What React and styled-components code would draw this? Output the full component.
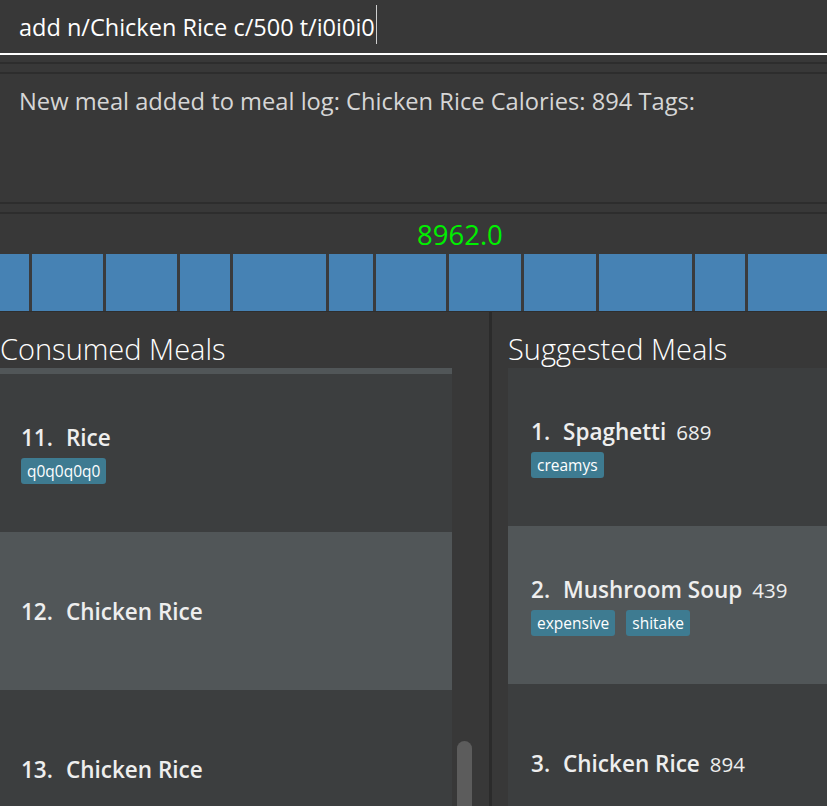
import React from 'react';
import styled, { createGlobalStyle } from 'styled-components';

const GlobalStyle = createGlobalStyle`
  *, *::before, *::after { box-sizing: border-box; }
  html, body { margin: 0; padding: 0; background: #383838; }
  body { font-family: "Open Sans", "Noto Sans", sans-serif; }
`;

const Window = styled.div`
  width: 827px;
  height: 806px;
  overflow: hidden;
  display: flex;
  flex-direction: column;
  background: #383838;
`;

const CommandBox = styled.div`
  flex: none;
  height: 55px;
  display: flex;
  align-items: center;
  padding: 0 0 0 19px;
  border-bottom: 2px solid #ffffff;
  color: #ffffff;
  font-size: 23.5px;
  line-height: 32px;
  white-space: pre;
`;

const Caret = styled.span`
  display: inline-block;
  width: 1px;
  height: 39px;
  margin: -4px 0 0 1px;
  background: #cfcfcf;
`;

const Separator = styled.div`
  flex: none;
  height: ${(p) => p.$h}px;
  border-bottom: 2px solid #2d2d2d;
`;

const ResultDisplay = styled.div`
  flex: none;
  height: 130px;
  padding: 12px 0 0 19px;
  border-bottom: 2px solid #2d2d2d;
  color: #d6d6d6;
  font-size: 23.7px;
  line-height: 31px;
  white-space: nowrap;
`;

const Status = styled.div`
  flex: none;
  height: 40px;
  padding: 2px 0 0 417px;
  color: #00f000;
  font-size: 27.5px;
  line-height: 37px;
`;

const Bar = styled.div`
  flex: none;
  height: 58px;
  display: flex;
  gap: 3px;
  background: #3a3b3d;
  border-bottom: 1px solid #2e2e2e;
`;

const Segment = styled.div`
  flex: ${(p) => (p.$grow ? '1 1 auto' : 'none')};
  background: #4682b4;
`;

const Lists = styled.div`
  flex: 1;
  display: flex;
  min-height: 0;
`;

const LeftPanel = styled.div`
  flex: none;
  width: 489px;
  display: flex;
  flex-direction: column;
`;

const Divider = styled.div`
  flex: none;
  width: 3px;
  background: #2b2b2b;
`;

const RightPanel = styled.div`
  flex: 1;
  display: flex;
  flex-direction: column;
  padding-left: 16px;
  min-width: 0;
`;

const PanelTitle = styled.div`
  flex: none;
  height: 56px;
  padding-top: 17px;
  color: #ffffff;
  font-size: 29px;
  font-weight: 300;
  line-height: 40px;
  white-space: nowrap;
`;

const ListRow = styled.div`
  flex: 1;
  display: flex;
  min-height: 0;
`;

const List = styled.div`
  flex: ${(p) => (p.$width ? 'none' : '1')};
  width: ${(p) => (p.$width ? `${p.$width}px` : 'auto')};
  display: flex;
  flex-direction: column;
`;

const Cell = styled.div`
  flex: none;
  height: ${(p) => p.$h || 158}px;
  background: ${(p) => (p.$light ? '#515658' : '#3c3e3f')};
  display: flex;
  flex-direction: column;
  justify-content: center;
  padding-left: ${(p) => p.$pad || 21}px;
`;

const NameRow = styled.div`
  display: flex;
  align-items: baseline;
  color: #eeeeee;
  line-height: 30px;
  white-space: nowrap;
  margin-top: 1px;
`;

const IdLabel = styled.span`
  font-size: 22.5px;
  font-weight: 600;
  margin-right: 13px;
`;

const NameLabel = styled.span`
  font-size: 22.5px;
  font-weight: 600;
`;

const Calories = styled.span`
  font-size: 20.5px;
  font-weight: 400;
  margin-left: 10px;
`;

const Tags = styled.div`
  display: flex;
  gap: 11px;
  margin-top: 5px;
`;

const Tag = styled.span`
  height: 26px;
  padding: 0 6px;
  border-radius: 3px;
  background: #3e7b91;
  color: #ffffff;
  font-size: 15.5px;
  font-weight: 500;
  line-height: 26px;
`;

const Track = styled.div`
  flex: none;
  width: 37px;
  padding: 373px 0 0 5px;
`;

const Thumb = styled.div`
  width: 15px;
  height: 90px;
  border-radius: 8px;
  background: #5c5c5c;
`;

const segments = [29, 71, 71, 50, 93, 44, 70, 72, 72, 93, 50, 0];

const consumed = [
  { id: 11, name: 'Rice', tags: ['q0q0q0q0'], light: false },
  { id: 12, name: 'Chicken Rice', tags: [], light: true },
  { id: 13, name: 'Chicken Rice', tags: [], light: false },
];

const suggested = [
  { id: 1, name: 'Spaghetti', cal: 689, tags: ['creamys'], light: false },
  { id: 2, name: 'Mushroom Soup', cal: 439, tags: ['expensive', 'shitake'], light: true },
  { id: 3, name: 'Chicken Rice', cal: 894, tags: [], light: false },
];

function MealCell({ meal, pad }) {
  return (
    <Cell $light={meal.light} $pad={pad}>
      <NameRow>
        <IdLabel>{meal.id}.</IdLabel>
        <NameLabel>{meal.name}</NameLabel>
        {meal.cal !== undefined && <Calories>{meal.cal}</Calories>}
      </NameRow>
      {meal.tags.length > 0 && (
        <Tags>
          {meal.tags.map((t) => (
            <Tag key={t}>{t}</Tag>
          ))}
        </Tags>
      )}
    </Cell>
  );
}

export default function App() {
  return (
    <Window>
      <GlobalStyle />
      <CommandBox>
        add n/Chicken Rice c/500 t/i0i0i0
        <Caret />
      </CommandBox>
      <Separator $h={9} />
      <Separator $h={10} />
      <ResultDisplay>New meal added to meal log: Chicken Rice Calories: 894 Tags:</ResultDisplay>
      <Separator $h={10} />
      <Status>8962.0</Status>
      <Bar>
        {segments.map((w, i) => (
          <Segment key={i} $grow={w === 0} style={w ? { width: w } : undefined} />
        ))}
      </Bar>
      <Lists>
        <LeftPanel>
          <PanelTitle>Consumed Meals</PanelTitle>
          <ListRow>
            <List $width={452}>
              <Cell $h={6} $light />
              {consumed.map((m) => (
                <MealCell key={m.id} meal={m} pad={21} />
              ))}
            </List>
            <Track>
              <Thumb />
            </Track>
          </ListRow>
        </LeftPanel>
        <Divider />
        <RightPanel>
          <PanelTitle>Suggested Meals</PanelTitle>
          <List>
            {suggested.map((m) => (
              <MealCell key={m.id} meal={m} pad={23} />
            ))}
          </List>
        </RightPanel>
      </Lists>
    </Window>
  );
}
